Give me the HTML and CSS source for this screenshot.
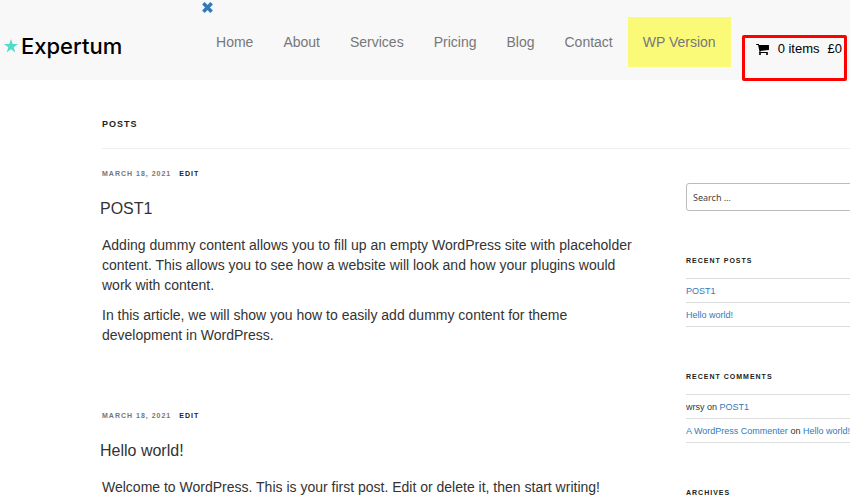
FILE: index.html
```html
<!DOCTYPE html>
<html lang="en">
<head>
<meta charset="utf-8">
<meta name="viewport" content="width=device-width, initial-scale=1">
<title>Expertum</title>
<link rel="stylesheet" href="styles.css">
</head>
<body>
<header class="site-header">
  <a class="logo" href="#">
    <svg class="logo-star" viewBox="0 0 14 14" aria-hidden="true"><path d="M7 0l1.700 5H14l-4.300 3.200L11.300 13.500 7 10.300 2.700 13.500 4.300 8.200 0 5h5.300z"/></svg>
    <span>Expertum</span>
  </a>
  <div class="menu">
    <button class="menu-close" type="button" aria-label="Close menu">
      <svg viewBox="0 0 11 11" aria-hidden="true"><path d="M2 2l7 7M9 2L2 9"/></svg>
    </button>
    <nav class="nav">
      <a href="#">Home</a>
      <a href="#">About</a>
      <a href="#">Services</a>
      <a href="#">Pricing</a>
      <a href="#">Blog</a>
      <a href="#">Contact</a>
      <a class="highlight" href="#">WP Version</a>
    </nav>
  </div>
  <a class="cart" href="#">
    <svg class="cart-icon" viewBox="0 0 1664 1536" aria-hidden="true"><path d="M640 1408q0 52-38 90t-90 38-90-38-38-90 38-90 90-38 90 38 38 90zm896 0q0 52-38 90t-90 38-90-38-38-90 38-90 90-38 90 38 38 90zm128-1088v512q0 24-16.500 42.500t-40.500 21.500l-1044 122q13 60 13 70 0 16-24 64h920q26 0 45 19t19 45-19 45-45 19h-1024q-26 0-45-19t-19-45q0-11 8-31.500t16-36 21.500-40 15.500-29.500l-177-823h-204q-26 0-45-19t-19-45 19-45 45-19h256q16 0 28.500 6.500t19.500 15.500 13 24.500 8 26 5.500 29.500 4.500 26h1201q26 0 45 19t19 45z"/></svg>
    <span>0 items</span>
    <span>£0</span>
  </a>
</header>
<div class="page">
  <h1 class="page-title">Posts</h1>
  <div class="columns">
    <main>
      <article class="post">
        <div class="meta"><time datetime="2021-03-18">March 18, 2021</time><a href="#">Edit</a></div>
        <h2>POST1</h2>
        <p>Adding dummy content allows you to fill up an empty WordPress site with placeholder content. This allows you to see how a website will look and how your plugins would work with content.</p>
        <p>In this article, we will show you how to easily add dummy content for theme development in WordPress.</p>
      </article>
      <article class="post">
        <div class="meta"><time datetime="2021-03-18">March 18, 2021</time><a href="#">Edit</a></div>
        <h2>Hello world!</h2>
        <p>Welcome to WordPress. This is your first post. Edit or delete it, then start writing!</p>
      </article>
    </main>
    <aside class="sidebar">
      <form class="search"><input type="search" aria-label="Search" placeholder="Search …"></form>
      <section class="widget">
        <h2>Recent Posts</h2>
        <ul>
          <li><a href="#">POST1</a></li>
          <li><a href="#">Hello world!</a></li>
        </ul>
      </section>
      <section class="widget">
        <h2>Recent Comments</h2>
        <ul>
          <li>wrsy on <a href="#">POST1</a></li>
          <li><a href="#">A WordPress Commenter</a> on <a href="#">Hello world!</a></li>
        </ul>
      </section>
      <section class="widget">
        <h2>Archives</h2>
      </section>
    </aside>
  </div>
</div>
</body>
</html>
```
FILE: styles.css
```css
* { box-sizing: border-box; }
html { overflow-x: hidden; scrollbar-width: none; }
body {
  margin: 0;
  background: #fff;
  color: #333;
  font: 14px/20px "Liberation Sans", Arial, sans-serif;
}
a { color: #337ab7; text-decoration: none; }
h1, h2, p, ul { margin: 0; padding: 0; }

.site-header {
  display: flex;
  align-items: flex-start;
  min-height: 80px;
  padding: 0 3px 0 4px;
  background: #f8f8f8;
}
.logo {
  display: flex;
  align-items: center;
  gap: 3px;
  margin-top: 32px;
  color: #000;
  font: 500 22px/28px Inter, sans-serif;
}
.logo-star { width: 14px; height: 14px; fill: #4fdcc9; }
.menu { margin-left: auto; }
.menu-close {
  display: block;
  width: 12px;
  height: 12px;
  margin-top: 1px;
  padding: 0;
  border: 0;
  background: none;
}
.menu-close svg {
  display: block;
  width: 13px;
  height: 13px;
  fill: none;
  stroke: #337ab7;
  stroke-width: 3;
}
.nav { display: flex; margin-top: 4px; }
.nav a { padding: 15px; color: #777; white-space: nowrap; }
.nav .highlight { background: #fafa78; }
.cart {
  display: flex;
  gap: 8px;
  min-height: 46px;
  margin: 35px 0 -1px 11px;
  padding: 4px 2px 4px 11px;
  border: 3px solid #f00;
  border-radius: 2px;
  color: #000;
  font-size: 13px;
  line-height: 14px;
  white-space: nowrap;
}
.cart-icon { width: 13px; height: 14px; margin-right: 1px; }

.page { overflow: hidden; padding: 36px 0 0 102px; }
.page-title {
  padding-bottom: 16px;
  border-bottom: 1px solid #eee;
  color: #222;
  font-size: 9px;
  line-height: 16px;
  letter-spacing: 1px;
  text-transform: uppercase;
}
.columns {
  display: grid;
  grid-template-columns: minmax(0, 1fr) 184px;
  gap: 46px;
  margin-right: -20px;
}
.post { padding-top: 17px; margin-bottom: 46px; }
.post:last-child { margin-bottom: 0; }
.post:last-child p { margin-bottom: 0; }
.meta {
  display: flex;
  gap: 8px;
  color: #767676;
  font-size: 7px;
  font-weight: bold;
  line-height: 16px;
  letter-spacing: 1px;
  text-transform: uppercase;
}
.meta a { color: #222; }
.post h2 {
  margin: 16px 0 15px -2px;
  font-size: 16px;
  font-weight: normal;
  line-height: 22px;
}
.post p { margin-bottom: 10px; }

.sidebar { padding-top: 34px; font-size: 9px; line-height: 14px; }
.search input {
  display: block;
  width: 100%;
  height: 28px;
  padding: 0 6px;
  border: 1px solid #bbb;
  border-radius: 3px;
  background: #fff;
  color: #333;
  font: 9px "Noto Sans", sans-serif;
}
.search input::placeholder { color: #444; opacity: 1; }
.widget { margin-top: 42px; }
.widget h2 {
  margin-bottom: 9px;
  color: #222;
  font-size: 7px;
  line-height: 16px;
  letter-spacing: 1px;
  text-transform: uppercase;
}
.widget ul { border-top: 1px solid #ddd; list-style: none; }
.widget li { padding: 5px 0 4px; border-bottom: 1px solid #ddd; white-space: nowrap; }
```
